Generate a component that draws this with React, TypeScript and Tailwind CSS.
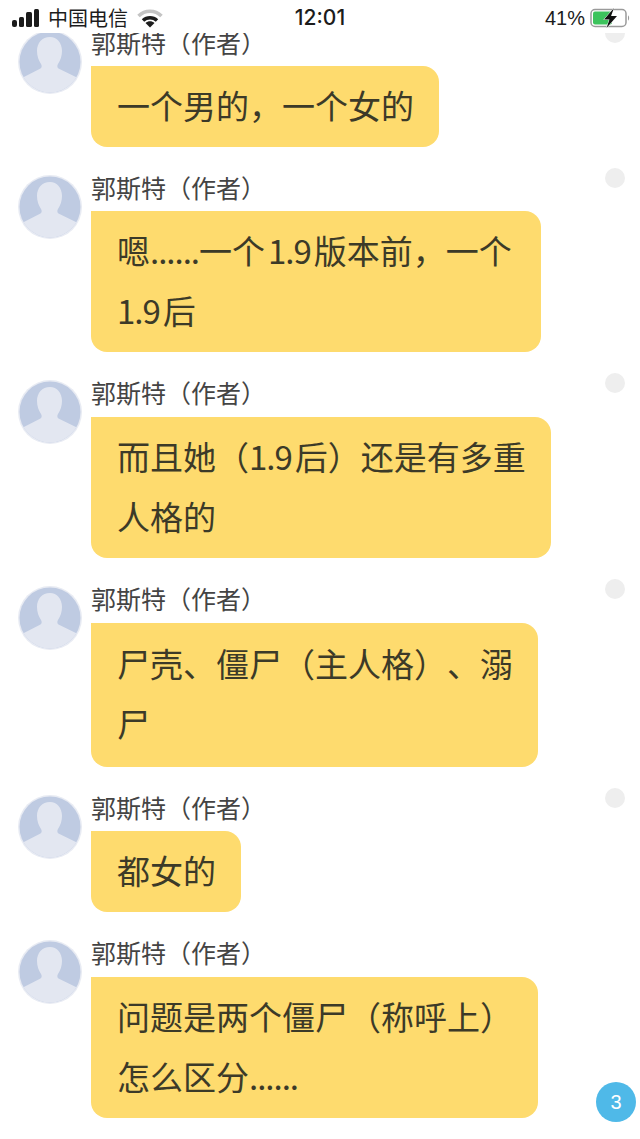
import type { ReactNode } from "react";

const cjk = "font-['Noto_Sans_CJK_SC','Noto_Sans',sans-serif]";

const Dots = () => <span className="tracking-[-1px]">......</span>;

const messages: { id: number; lines: ReactNode[]; dot: boolean; py: string; nameH: string; pr?: string; first?: boolean }[] = [
  { id: 1, lines: ["一个男的，一个女的"], dot: true, py: "py-[10.5px]", nameH: "h-[36px]", first: true },
  {
    id: 2,
    lines: [
      <>
        嗯<Dots />一个<span className="mx-[3px] tracking-[-1px]">1.9</span>版本前，一个
      </>,
      <>
        <span className="mr-[3px] tracking-[-1px]">1.9</span>后
      </>,
    ],
    dot: true,
    py: "py-[10.5px]",
    nameH: "h-[36px]",
    pr: "pr-[29px]",
  },
  {
    id: 3,
    lines: [
      <>
        而且她（<span className="mr-[3px] tracking-[-1px]">1.9</span>后）还是有多重
      </>,
      "人格的",
    ],
    dot: true,
    py: "py-[10.5px]",
    nameH: "h-[37px]",
  },
  { id: 4, lines: ["尸壳、僵尸（主人格）、溺", "尸"], dot: true, py: "py-[12px]", nameH: "h-[37px]" },
  { id: 5, lines: ["都女的"], dot: true, py: "py-[10.5px]", nameH: "h-[36px]" },
  {
    id: 6,
    lines: [
      "问题是两个僵尸（称呼上）",
      <>
        怎么区分
        <Dots />
      </>,
    ],
    dot: false,
    py: "py-[10.5px]",
    nameH: "h-[37px]",
  },
];

const Avatar = ({ id }: { id: number }) => (
  <svg width="64" height="64" viewBox="0 0 64 64" className="shrink-0">
    <defs>
      <clipPath id={`av-${id}`}>
        <circle cx="32" cy="32" r="30.5" />
      </clipPath>
    </defs>
    <circle cx="32" cy="32" r="32" fill="#e8ebf3" />
    <circle cx="32" cy="32" r="30.5" fill="#bfcbe2" />
    <path
      clipPath={`url(#av-${id})`}
      d="M32 7c-8 0-13 6-13 14 0 5 1.500 9 4 13 1.200 2 .8 4-1.500 5L0 50v14h64V50L41.500 39c-2.300-1-2.700-3-1.500-5 2.500-4 4-8 4-13 0-8-5-14-12-14z"
      fill="#e3e7f1"
    />
  </svg>
);

const Message = ({
  id,
  lines,
  first,
  dot,
  py,
  nameH,
  pr = "pr-[25px]",
}: {
  id: number;
  lines: ReactNode[];
  first?: boolean;
  dot: boolean;
  py: string;
  nameH: string;
  pr?: string;
}) => (
  <div className={`flex pl-[18px] pr-[15px] ${first ? "-mt-[3px]" : ""}`}>
    <Avatar id={id} />
    <div className="ml-[9px] flex-1">
      <div className={`text-[25px] leading-[24px] text-[#444444] ${nameH}`}>郭斯特（作者）</div>
      <div
        className={`w-fit bg-[#fedb6e] rounded-tr-[16px] rounded-b-[16px] pl-[26px] text-[33px] leading-[60px] text-[#3c3a28] whitespace-nowrap ${pr} ${py}`}
      >
        {lines.map((l, i) => (
          <div key={i} className="-translate-y-[2px]">
            {l}
          </div>
        ))}
      </div>
    </div>
    {dot ? <div className="w-5 h-5 rounded-full bg-[#eeeeee] -mt-[7px] shrink-0" /> : <div className="w-5 shrink-0" />}
  </div>
);

const StatusBar = () => (
  <div className="relative z-10 h-[33px] pt-[2px] bg-white flex items-center pl-[12px] pr-[9px] justify-between text-[#1c1c1c]">
    <div className="flex items-center w-[200px]">
      <div className="flex items-end gap-[2px] h-[18px]">
        <div className="w-[5px] h-[7px] rounded-[2px] bg-[#1c1c1c]" />
        <div className="w-[5px] h-[10px] rounded-[1.5px] bg-[#1c1c1c]" />
        <div className="w-[5.500px] h-[15px] rounded-[1.5px] bg-[#1c1c1c]" />
        <div className="w-[5.500px] h-[18px] rounded-[1.5px] bg-[#1c1c1c]" />
      </div>
      <span className="ml-[9px] text-[20px] leading-none">中国电信</span>
      <svg width="26" height="20" viewBox="0 0 26 20" className="ml-[9px]">
        <path d="M1.500 8C8 1.500 18 1.500 24.500 8" fill="none" stroke="#c4c4c4" strokeWidth="3.500" />
        <path d="M6 12.500C10 8.700 16 8.700 20 12.500" fill="none" stroke="#1c1c1c" strokeWidth="3.500" />
        <path d="M13 19.500l-4.500-4.500c2.500-2.300 6.500-2.300 9 0z" fill="#1c1c1c" />
      </svg>
    </div>
    <div className="text-[21px] leading-none font-['Inter',sans-serif] font-medium mr-[3px]">12:01</div>
    <div className="flex items-center w-[200px] justify-end">
      <span className="text-[20px] leading-none font-['Liberation_Sans',sans-serif] mr-[5px]">41%</span>
      <svg width="41" height="20" viewBox="0 0 41 20">
        <rect x="1" y="1.500" width="35" height="17" rx="4" fill="none" stroke="#9a9a9a" strokeWidth="1.500" />
        <rect x="3" y="3.500" width="19" height="13" rx="2" fill="#3cc35c" />
        <path d="M38 7.500c1.500.5 1.500 4.500 0 5z" fill="#9a9a9a" />
        <path d="M24 0L14 11.500h5.500L16.500 20 27 8h-6l3-8z" fill="#111111" stroke="#ffffff" strokeWidth="1" paintOrder="stroke" />
      </svg>
    </div>
  </div>
);

export default function App() {
  return (
    <div className={`relative w-[640px] h-[1139px] overflow-hidden bg-white [text-spacing-trim:space-all] ${cjk}`}>
      <StatusBar />
      <div className="flex flex-col gap-[28px]">
        {messages.map((m) => (
          <Message key={m.id} {...m} />
        ))}
      </div>
      <div className="absolute left-[596px] top-[1082px] w-10 h-10 rounded-full bg-[#4fb9e8] flex items-center justify-center text-white text-[20px] font-['Liberation_Sans',sans-serif]">
        3
      </div>
    </div>
  );
}
